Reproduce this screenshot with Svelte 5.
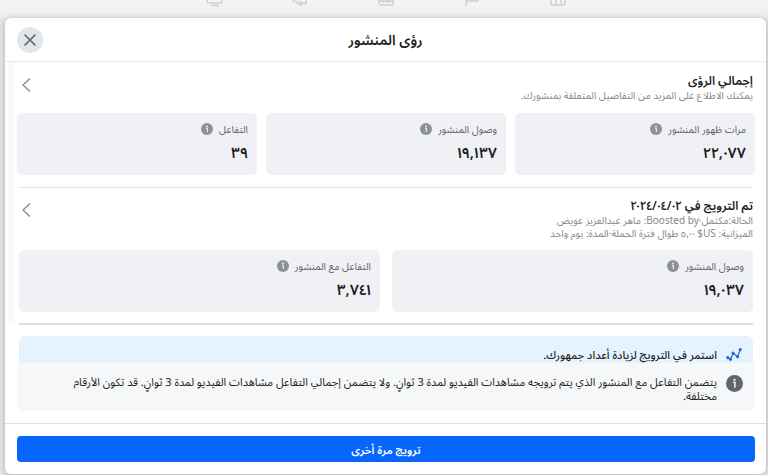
<script>
	const totals = [
		{ label: 'مرات ظهور المنشور', value: '٢٢,٠٧٧' },
		{ label: 'وصول المنشور', value: '١٩,١٣٧' },
		{ label: 'التفاعل', value: '٣٩' },
	];
	const boosted = [
		{ label: 'وصول المنشور', value: '١٩,٠٣٧' },
		{ label: 'التفاعل مع المنشور', value: '٣,٧٤١' },
	];
</script>

{#snippet info()}
	<svg class="info" viewBox="0 0 12 12" aria-hidden="true">
		<circle cx="6" cy="6" r="6" fill="currentColor" />
		<circle cx="6" cy="3.4" r="0.8" fill="#fff" />
		<path d="M5 5.2h1.3v3.8" stroke="#fff" fill="none" />
	</svg>
{/snippet}

{#snippet chevron()}
	<svg width="10" height="16" viewBox="0 0 10 16" fill="none" stroke="#85888d" stroke-width="1.3" aria-hidden="true">
		<path d="M9 1.5 2 8l7 6.5" />
	</svg>
{/snippet}

{#snippet stats(items)}
	<div class="stats">
		{#each items as { label, value }}
			<div class="stat">
				<div class="label">{label} {@render info()}</div>
				<strong>{value}</strong>
			</div>
		{/each}
	</div>
{/snippet}

<div class="page" dir="rtl">
	<nav class="topbar" aria-hidden="true">
		<svg viewBox="0 0 18 8"><path d="M1 0v1q0 2 2 2h11q2 0 2-2V0M5 5.500h8" /></svg>
		<svg viewBox="0 0 18 8"><path d="M1 0v1l4 1 1 2 3 1-1-3 6 2V0" /></svg>
		<svg viewBox="0 0 18 8"><path d="M1 0v3q0 2 2 2h10q2 0 2-2V0M5 0v3M8 0v3M11 0v3M1 1h14" /></svg>
		<svg viewBox="0 0 18 8"><path d="M2 0v6M2 1h12V0" /></svg>
		<svg viewBox="0 0 18 8"><path d="M1 0v3q0 2 2 2h10q2 0 2-2V0M6 0v5M11 0v5" /></svg>
	</nav>

	<div class="dialog" role="dialog" aria-labelledby="title">
		<header>
			<h1 id="title">رؤى المنشور</h1>
			<button class="close" aria-label="إغلاق">
				<svg width="12" height="12" viewBox="0 0 12 12" stroke="#5c626b" stroke-width="1.6" stroke-linecap="round" aria-hidden="true">
					<path d="M1 1l10 10M11 1L1 11" />
				</svg>
			</button>
		</header>

		<div class="content">
			<section class="total">
				<div class="heading">
					<div>
						<h2>إجمالي الرؤى</h2>
						<p>يمكنك الاطلاع على المزيد من التفاصيل المتعلقة بمنشورك.</p>
					</div>
					<button class="more" aria-label="إجمالي الرؤى">{@render chevron()}</button>
				</div>
				{@render stats(totals)}
			</section>

			<hr />

			<section class="boost">
				<div class="heading">
					<div>
						<h2>تم الترويج في ٢٠٢٤/٠٤/٠٢</h2>
						<p>الحالة:مكتمل·Boosted by: ماهر عبدالعزيز عويض</p>
						<p>الميزانية: US$ ٥,٠٠ طوال فترة الحملة·المدة: يوم واحد</p>
					</div>
					<button class="more" aria-label="تفاصيل الترويج">{@render chevron()}</button>
				</div>
				{@render stats(boosted)}
			</section>

			<hr class="thick" />

			<div class="tip">
				<svg width="16" height="15" viewBox="0 0 18 15" fill="#1b63c6" stroke="#1b63c6" aria-hidden="true">
					<path d="M2 11l3 2 3-7 5 4 3-8" fill="none" stroke-width="1.3" />
					<circle cx="2" cy="11" r="1.3" />
					<circle cx="5" cy="13" r="1.3" />
					<circle cx="8" cy="6" r="1.3" />
					<circle cx="13" cy="10" r="1.3" />
					<circle cx="16" cy="2" r="1.3" />
				</svg>
				<span>استمر في الترويج لزيادة أعداد جمهورك.</span>
			</div>
			<div class="note">
				{@render info()}
				<span>يتضمن التفاعل مع المنشور الذي يتم ترويجه مشاهدات الفيديو لمدة 3 ثوانٍ. ولا يتضمن إجمالي التفاعل مشاهدات الفيديو لمدة 3 ثوانٍ. قد تكون الأرقام مختلفة.</span>
			</div>
		</div>

		<footer>
			<button class="primary">ترويج مرة أخرى</button>
		</footer>
	</div>
</div>

<style>
	:global(body) {
		background: #e6e6e7;
	}
	.page {
		font-family: "Noto Sans Arabic UI", "Noto Sans", "Noto Sans Arabic", sans-serif;
		color: #1c1e21;
		padding: 0 2px 2px 5px;
	}
	.topbar {
		display: flex;
		justify-content: center;
		gap: 68px;
		height: 18px;
		margin: 0 -2px 0 -5px;
		padding-left: 5px;
		background: linear-gradient(#f5f5f5, #ededed);
		direction: ltr;
	}
	.topbar svg {
		width: 18px;
		height: 8px;
		fill: none;
		stroke: #cfcfcf;
		stroke-width: 1.5;
	}
	.dialog {
		background: #fff;
		border-radius: 6px;
		box-shadow: 0 1px 6px rgba(0, 0, 0, 0.25);
	}
	header {
		display: grid;
		grid-template-columns: 26px 1fr 26px;
		align-items: center;
		height: 43px;
		padding: 0 12px;
		border-bottom: 1px solid #e8e9eb;
	}
	h1 {
		grid-column: 2;
		margin: 0;
		font-size: 14px;
		line-height: 20px;
		font-weight: 600;
		text-align: center;
	}
	button {
		display: flex;
		align-items: center;
		justify-content: center;
		border: 0;
		padding: 0;
		font: inherit;
		cursor: pointer;
	}
	.close {
		width: 26px;
		height: 26px;
		border-radius: 50%;
		background: #e2e5e9;
	}
	.content {
		padding: 11px 11px 12px 12px;
		background: linear-gradient(#f9f9fa, #f9f9fa) 3px 0 / 5px 260px no-repeat;
	}
	.heading {
		display: flex;
		justify-content: space-between;
		align-items: flex-start;
		padding: 0 2px 0 4px;
	}
	h2 {
		margin: 0;
		font-size: 12px;
		line-height: 16px;
		font-weight: 600;
	}
	p {
		margin: 0;
		font-size: 10px;
		line-height: 13px;
		color: #85878b;
	}
	.more {
		background: none;
		padding-top: 4px;
	}
	.stats {
		display: flex;
		gap: 9px;
		margin-top: 11px;
	}
	.boost .stats {
		gap: 12px;
		margin: 10px 2px 0;
	}
	.stat {
		flex: 1;
		box-sizing: border-box;
		height: 62px;
		padding: 8px 9px;
		border-radius: 5px;
		background: #f0f1f5;
	}
	.label {
		display: flex;
		align-items: center;
		gap: 6px;
		font-size: 10px;
		line-height: 16px;
		color: #5f6369;
	}
	.info {
		flex: none;
		width: 12px;
		height: 12px;
		color: #8d9299;
	}
	.stat strong {
		display: block;
		font-size: 15px;
		line-height: 20px;
		font-weight: 600;
		margin-top: 5px;
	}
	hr {
		margin: 12px 2px 10px;
		border: 0;
		border-top: 1px solid #e1e2e4;
	}
	.thick {
		border-top: 2px solid #dedfe0;
		margin: 11px 2px;
	}
	.tip {
		display: flex;
		align-items: center;
		gap: 9px;
		margin: 0 2px;
		padding: 10px 11px 0;
		border-radius: 6px 6px 0 0;
		background: #e6f2fe;
		font-size: 11px;
		line-height: 17px;
		font-weight: 500;
	}
	.note {
		display: flex;
		gap: 9px;
		padding: 12px 12px 8px 32px;
		border-radius: 0 0 6px 6px;
		background: #f6f7f9;
		font-size: 11px;
		line-height: 14px;
	}
	.note .info {
		width: 17px;
		height: 17px;
		color: #61656c;
	}
	footer {
		padding: 12px 11px 12px 12px;
		border-top: 1px solid #dfe0e2;
	}
	.primary {
		width: 100%;
		height: 26px;
		border-radius: 4px;
		background: #0866ff;
		color: #fff;
		font-size: 11px;
		font-weight: 600;
	}
</style>
